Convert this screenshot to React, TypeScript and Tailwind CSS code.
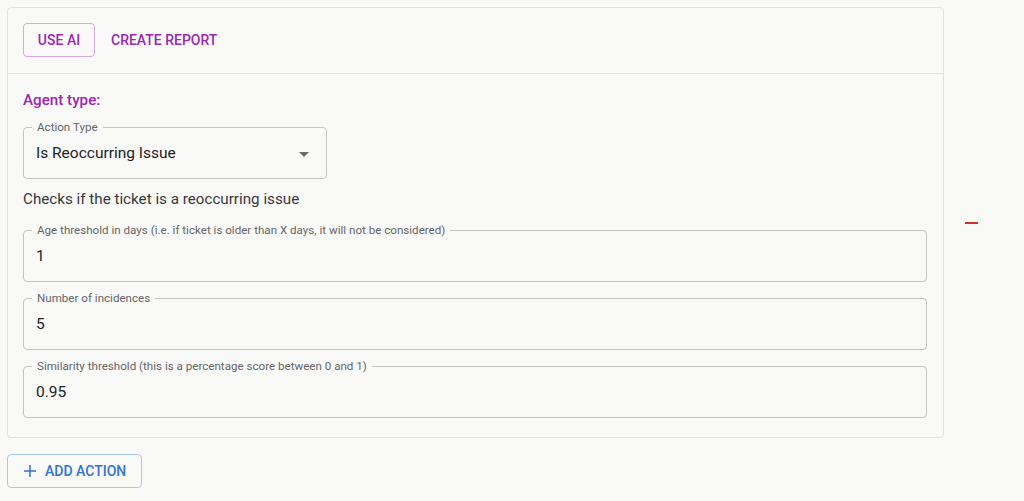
import React from "react";

function Field({ label, value, className = "" }: { label: string; value: string; className?: string }) {
  return (
    <div className={`relative h-[52px] rounded-[4px] border border-[#c4c4c4] flex items-center pl-[12px] ${className}`}>
      <span className="absolute left-[8px] top-[-9px] px-[5px] bg-[#f9f9f8] text-[11.6px] leading-[16px] text-[#666666] whitespace-nowrap">
        {label}
      </span>
      <span className="text-[15.5px] leading-[24px] text-[#222222]">{value}</span>
    </div>
  );
}

export default function App() {
  return (
    <div
      className="min-h-[501px] w-full bg-[#f9f9f8] pt-[7px] pl-[7px]"
      style={{ fontFamily: "Roboto, 'Liberation Sans', sans-serif" }}
    >
      <div className="flex items-center">
        <div className="w-[937px] rounded-[4px] border border-[#e2e2e2] bg-[#f9f9f8]">
          <div className="flex items-center gap-[16px] border-b border-[#e2e2e2] px-[15px] pt-[15px] pb-[16px]">
            <button className="h-[34px] w-[72px] rounded-[4px] border border-[#d7a9de] text-[14px] font-medium uppercase text-[#9c27b0]">
              Use AI
            </button>
            <button className="h-[34px] text-[14px] font-medium uppercase text-[#9c27b0]">
              Create Report
            </button>
          </div>
          <div className="px-[15px] pt-[14px] pb-[19px] flex flex-col">
            <div className="text-[15.2px] leading-[24px] font-medium text-[#9c27b0]">Agent type:</div>
            <div className="relative mt-[15px] w-[304px] h-[52px] rounded-[4px] border border-[#c4c4c4] flex items-center pl-[12px]">
              <span className="absolute left-[8px] top-[-9px] px-[5px] bg-[#f9f9f8] text-[11.6px] leading-[16px] text-[#666666] whitespace-nowrap">
                Action Type
              </span>
              <span className="text-[15.5px] leading-[24px] text-[#222222]">Is Reoccurring Issue</span>
              <svg className="absolute right-[10px] top-[14px]" width="24" height="24" viewBox="0 0 24 24">
                <path d="M7 10l5 5 5-5z" fill="#6b6b6b" />
              </svg>
            </div>
            <div className="mt-[8px] text-[15.2px] leading-[24px] text-[#383838]">
              Checks if the ticket is a reoccurring issue
            </div>
            <Field
              className="mt-[19px] w-[904px]"
              label="Age threshold in days (i.e. if ticket is older than X days, it will not be considered)"
              value="1"
            />
            <Field className="mt-[16px] w-[904px]" label="Number of incidences" value="5" />
            <Field
              className="mt-[16px] w-[904px]"
              label="Similarity threshold (this is a percentage score between 0 and 1)"
              value="0.95"
            />
          </div>
        </div>
        <button className="ml-[16px] flex h-[24px] w-[24px] items-center justify-center">
          <svg width="24" height="24" viewBox="0 0 24 24">
            <rect x="5" y="11" width="13" height="2" fill="#d32f2f" />
          </svg>
        </button>
      </div>
      <button className="mt-[16px] flex h-[34px] w-[135px] items-center gap-[6px] rounded-[4px] border border-[#a9c8ee] pl-[13px] text-[14px] font-medium uppercase text-[#2f74d0]">
        <svg width="18" height="18" viewBox="0 0 24 24">
          <path d="M12 4v16M4 12h16" stroke="#2f74d0" strokeWidth="2" />
        </svg>
        Add Action
      </button>
    </div>
  );
}
